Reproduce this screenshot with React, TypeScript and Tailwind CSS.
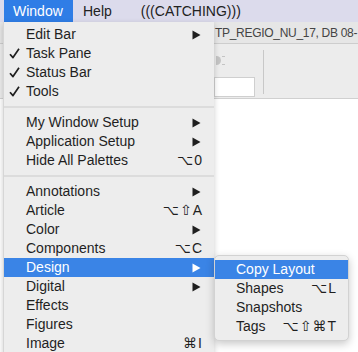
import { Fragment } from 'react';

type Item = { label?: string; check?: boolean; arrow?: boolean; keys?: string; active?: boolean; sep?: boolean };

const items: Item[] = [
  { label: 'Edit Bar', arrow: true },
  { label: 'Task Pane', check: true },
  { label: 'Status Bar', check: true },
  { label: 'Tools', check: true },
  { sep: true },
  { label: 'My Window Setup', arrow: true },
  { label: 'Application Setup', arrow: true },
  { label: 'Hide All Palettes', keys: '⌥0' },
  { sep: true },
  { label: 'Annotations', arrow: true },
  { label: 'Article', keys: '⌥⇧A' },
  { label: 'Color', arrow: true },
  { label: 'Components', keys: '⌥C' },
  { label: 'Design', arrow: true, active: true },
  { label: 'Digital', arrow: true },
  { label: 'Effects' },
  { label: 'Figures' },
  { label: 'Image', keys: '⌘I' },
];

const sub: Item[] = [
  { label: 'Copy Layout', active: true },
  { label: 'Shapes', keys: '⌥L' },
  { label: 'Snapshots' },
  { label: 'Tags', keys: '⌥⇧⌘T' },
];

function Row({ item, pad }: { item: Item; pad: string }) {
  if (item.sep) {
    return (
      <div className="h-[12px] flex items-center">
        <div className="h-[2px] w-full bg-[#dcdcdc]" />
      </div>
    );
  }
  return (
    <div
      className={`h-[19px] flex items-center pr-[11px] ${pad} ${
        item.active ? 'bg-[#3a84e6] text-white' : 'text-[#1f1f1f]'
      }`}
    >
      <span className="w-[17px] -ml-[17px] flex items-center">
        {item.check && (
          <svg width="11" height="11" viewBox="0 0 11 11">
            <path d="M1 6.2 L4 9.6 L10 0.8" fill="none" stroke="currentColor" strokeWidth="1.7" strokeLinejoin="round" />
          </svg>
        )}
      </span>
      <span className="flex-1 whitespace-nowrap">{item.label}</span>
      {item.keys && <span className="tracking-[1px] text-[14px]">{item.keys}</span>}
      {item.arrow && (
        <svg width="9" height="10" viewBox="0 0 9 10" className="mr-[2px]">
          <path d="M0.5 0.5 L8.5 5 L0.5 9.5 Z" fill="currentColor" />
        </svg>
      )}
    </div>
  );
}

export default function App() {
  return (
    <div
      className="relative w-[358px] h-[352px] overflow-hidden bg-white text-[14px]"
      style={{ fontFamily: '"Liberation Sans", "DejaVu Sans", sans-serif' }}
    >
      {/* menu bar */}
      <div className="h-[22px] flex items-stretch bg-[#dcdbec] text-[#222]">
        <div className="ml-[4px] w-[69px] pl-[9px] flex items-center bg-[#2f7de6] text-white">Window</div>
        <div className="ml-[10px] flex items-center">Help</div>
        <div className="ml-[29px] flex items-center">(((CATCHING)))</div>
      </div>

      {/* background document window */}
      <div className="flex flex-col">
        <div className="h-[22px] flex items-center pl-[215px] bg-[#e6e6e6] border-b border-[#cdcdcd] text-[#444] text-[12px] tracking-[-0.3px] whitespace-nowrap">
          TP_REGIO_NU_17, DB 08-
        </div>
        <div className="h-[55px] bg-[#ececec] border-b border-[#d0d0d0] flex pl-[214px] pt-[6px]">
          <div className="flex flex-col w-[41px]">
            <div className="h-[12px] mt-[6px] ml-[2px] w-[10px] flex gap-[1px]">
              <div className="w-[5px] h-[9px] rounded-r-full bg-[#c4c4c4]" />
              <div className="w-[3px] h-[9px] border-y border-[#c4c4c4]" />
            </div>
            <div className="mt-[9px] h-[20px] bg-white border border-[#cfcfcf]" />
          </div>
          <div className="ml-[8px] w-px h-[44px] bg-[#c8c8c8]" />
        </div>
        <div className="flex-1 bg-white" />
      </div>

      {/* dropdown */}
      <div className="absolute left-[3px] top-[22px] w-[211px] h-[340px] bg-[#ededed] border-l border-[#d6d6d6] pt-[3px] shadow-[0_2px_6px_rgba(0,0,0,0.2)]">
        {items.map((it, i) => (
          <Fragment key={i}>
            <Row item={it} pad="pl-[22px]" />
          </Fragment>
        ))}
      </div>

      {/* submenu */}
      <div className="absolute left-[214px] top-[255px] w-[135px] py-[4px] bg-[#ededed] rounded-[5px] border border-[#d2d2d2] shadow-[0_3px_8px_rgba(0,0,0,0.22)]">
        {sub.map((it, i) => (
          <Row key={i} item={it} pad="pl-[21px]" />
        ))}
      </div>
    </div>
  );
}
